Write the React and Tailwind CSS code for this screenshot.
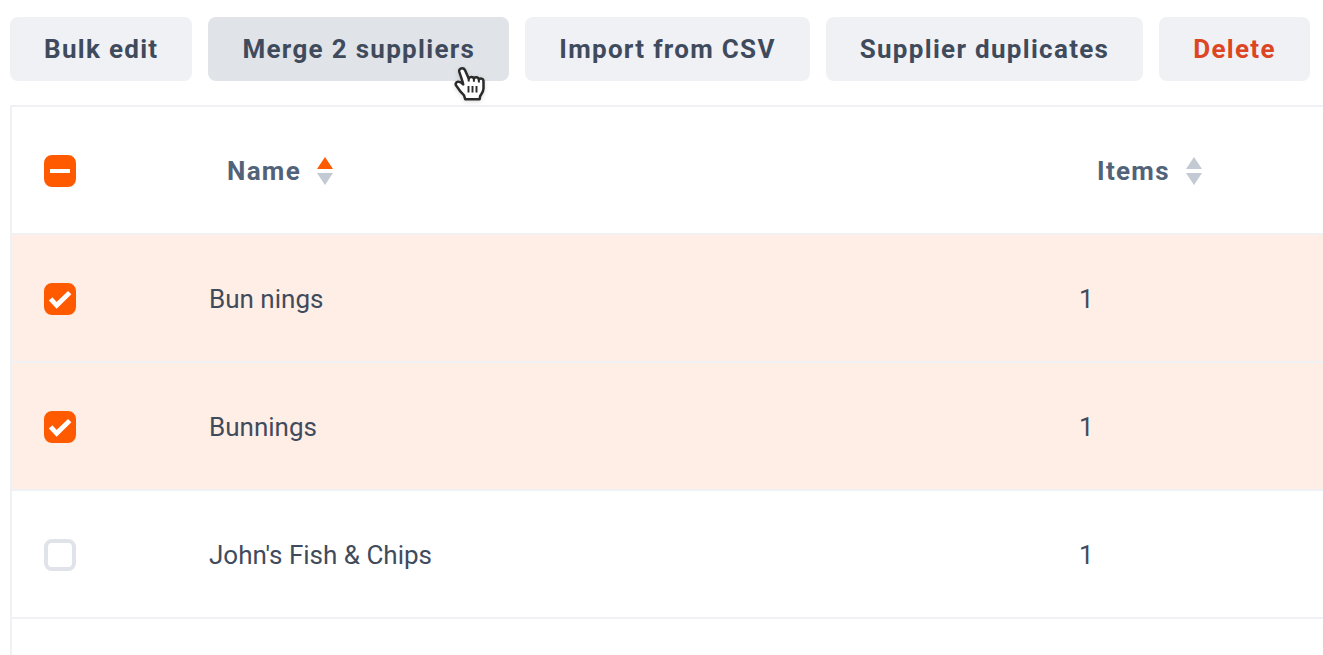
import { useEffect, useRef, useState } from "react";

const actions = [
  { label: "Bulk edit", tone: "bg-[#f0f1f5] text-[#3f4b5c]" },
  { label: "Merge 2 suppliers", tone: "bg-[#e0e4e8] text-[#3f4b5c]", hovered: true },
  { label: "Import from CSV", tone: "bg-[#f0f1f5] text-[#3f4b5c]" },
  { label: "Supplier duplicates", tone: "bg-[#f0f1f5] text-[#3f4b5c]" },
  { label: "Delete", tone: "bg-[#f0f1f5] text-[#dc4622]" },
];

const suppliers = ["Bun nings", "Bunnings", "John's Fish & Chips"];

function Pointer() {
  return (
    <svg
      viewBox="0 0 32 36"
      aria-hidden="true"
      className="pointer-events-none absolute right-6 -bottom-5 z-10 h-9 w-8 drop-shadow-sm"
    >
      <path
        d="M9.2 3.2c-2.4 0-3.4 1.9-2.8 4l2.9 8.6.9 3.6c-1.5-1.6-3-3-5.2-2.6-2.4.5-2.9 2.4-1.7 4l3.6 5c1.4 2 3 3 4.3 5l1 3.4h14.4l.6-3.2c1.6-2.6 3.3-4.6 3.3-7.6v-7.2c0-2.8-3.6-3.6-4.6-1.4-.2-2.8-4.2-3.5-5-1-.6-2.4-4.4-2.6-5.2-.2L12.300 5.800c-.6-1.700-1.500-2.600-3.100-2.600z"
        fill="#fff"
        stroke="#2b2b2b"
        strokeWidth="2.5"
        strokeLinejoin="round"
      />
      <path
        d="M15.700 13.600v3M20.900 13.800v3M25.900 15.200v2.400"
        stroke="#2b2b2b"
        strokeWidth="2"
        fill="none"
      />
      <path d="M15.500 21v6.500M19.500 21v6.500M23.500 21v6.500" stroke="#2b2b2b" strokeWidth="1.900" fill="none" />
    </svg>
  );
}

function Tick({ label, checked, mixed = false, onChange }) {
  const ref = useRef(null);
  useEffect(() => {
    ref.current.indeterminate = mixed;
  }, [mixed]);
  return (
    <span className="relative block size-8">
      <input
        ref={ref}
        type="checkbox"
        aria-label={label}
        checked={checked}
        onChange={onChange}
        className="block size-8 appearance-none rounded-lg border-4 border-[#e0e3e9] bg-white checked:border-[#ff5a00] checked:bg-[#ff5a00] indeterminate:border-[#ff5a00] indeterminate:bg-[#ff5a00]"
      />
      {(mixed || checked) && (
        <svg viewBox="0 0 32 32" aria-hidden="true" className="pointer-events-none absolute inset-0 size-8">
          {mixed ? (
            <path d="M6 16h20" stroke="#fff" strokeWidth="4" />
          ) : (
            <path d="M6.600 15.800l6.100 6.500L25.700 9.600" fill="none" stroke="#fff" strokeWidth="4.800" />
          )}
        </svg>
      )}
    </span>
  );
}

function SortButton({ label, ascending = false }) {
  return (
    <button type="button" className="flex items-center gap-4 font-bold tracking-wider">
      {label}
      <svg viewBox="0 0 16 28" aria-hidden="true" className="h-7 w-4">
        <path d="M8 0l8 12H0z" fill={ascending ? "#ff5a00" : "#c3cad4"} />
        <path d="M0 16h16L8 28z" fill="#c3cad4" />
      </svg>
    </button>
  );
}

export default function App() {
  const [selected, setSelected] = useState([true, true, false]);
  const all = selected.every(Boolean);
  const some = selected.some(Boolean);
  const toggle = (index) => setSelected(selected.map((value, i) => (i === index ? !value : value)));

  return (
    <main className="flex min-h-screen flex-col bg-white pl-[10px] font-[Roboto,sans-serif] text-[26px] leading-8 text-[#3f4b5c]">
      <div className="flex flex-wrap gap-4 pt-[17px] pb-6">
        {actions.map((action) => (
          <button
            key={action.label}
            type="button"
            className={`relative h-16 rounded-lg px-[34px] font-bold tracking-wider whitespace-nowrap ${action.tone}`}
          >
            {action.label}
            {action.hovered && <Pointer />}
          </button>
        ))}
      </div>
      <div className="grow border-t-2 border-l-2 border-[#f0f1f5]">
        <table className="w-full table-fixed border-separate border-spacing-0 text-left [&_td]:border-b-2 [&_td]:border-[#f0f1f5] [&_td]:pt-0.5 [&_th]:border-b-2 [&_th]:border-[#f0f1f5] [&_th]:pt-0.5">
          <colgroup>
            <col className="w-[197px]" />
            <col />
            <col className="w-[244px]" />
          </colgroup>
          <thead className="text-[#526379]">
            <tr className="h-32">
              <th scope="col" className="pl-8">
                <Tick
                  label="Select all suppliers"
                  checked={all}
                  mixed={some && !all}
                  onChange={() => setSelected(selected.map(() => !all))}
                />
              </th>
              <th scope="col" aria-sort="ascending" className="pl-[18px]">
                <SortButton label="Name" ascending />
              </th>
              <th scope="col" className="pl-[18px]">
                <SortButton label="Items" />
              </th>
            </tr>
          </thead>
          <tbody>
            {suppliers.map((name, index) => (
              <tr key={name} className={`h-32 ${selected[index] ? "bg-[#ffeee6]" : "bg-white"}`}>
                <td className="pl-8">
                  <Tick label={`Select ${name}`} checked={selected[index]} onChange={() => toggle(index)} />
                </td>
                <td>{name}</td>
                <td>1</td>
              </tr>
            ))}
          </tbody>
        </table>
      </div>
    </main>
  );
}
